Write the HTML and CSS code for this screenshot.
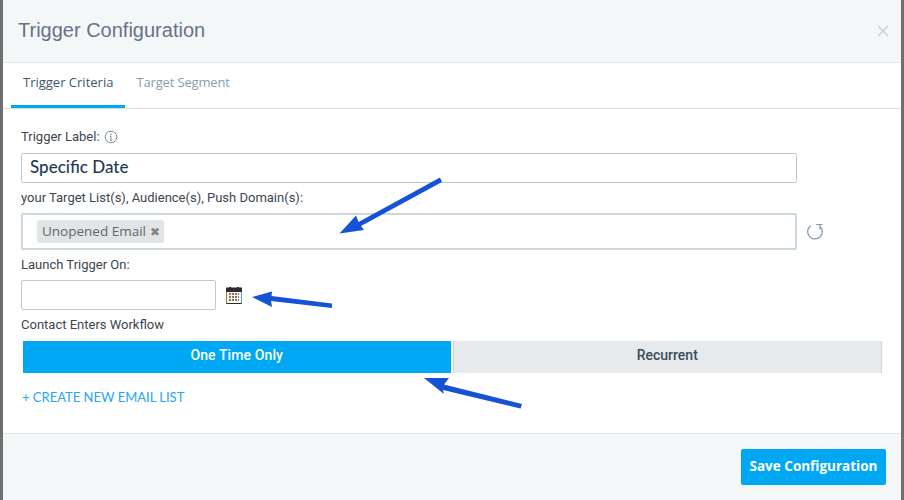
FILE: index.html
```html
<!DOCTYPE html>
<html lang="en">
<head>
<meta charset="utf-8">
<title>Trigger Configuration</title>
<link rel="stylesheet" href="styles.css">
</head>
<body>
<div class="modal">
  <header class="modal-head">
    <h1 class="modal-title">Trigger Configuration</h1>
    <svg class="close" width="12" height="12" viewBox="0 0 12 12"><path d="M1 1l10 10M11 1L1 11" stroke="#c9cdd0" stroke-width="1.4" fill="none"/></svg>
  </header>
  <nav class="tabs">
    <div class="tab active">Trigger Criteria</div>
    <div class="tab inactive">Target Segment</div>
  </nav>
  <main class="body">
    <div class="label label-first">Trigger Label:
      <svg class="info" width="14" height="14" viewBox="0 0 14 14"><circle cx="7" cy="7" r="5.8" fill="none" stroke="#7d8fa3" stroke-width="1"/><path d="M7 6.200v4M5.800 10.300h2.400M5.900 6.200H7" stroke="#7d8fa3" stroke-width="1" fill="none"/><circle cx="7" cy="4.200" r=".8" fill="#7d8fa3"/></svg>
    </div>
    <div class="text-input">Specific Date</div>
    <div class="label label-list">your Target List(s), Audience(s), Push Domain(s):</div>
    <div class="list-row">
      <div class="tag-box"><span class="tag">Unopened Email <span class="tag-x">✖</span></span></div>
      <svg class="refresh" width="18" height="18" viewBox="0 0 18 18"><path d="M4.600 2.800A7.300 7.300 0 1 0 14 3.400" fill="none" stroke="#7f9ab3" stroke-width="1.200"/><path d="M10 1.500h6.500M14 1.500v5" stroke="#7f9ab3" stroke-width="1.200" fill="none"/></svg>
    </div>
    <div class="label label-launch">Launch Trigger On:</div>
    <div class="date-row">
      <div class="date-input"></div>
      <svg class="cal" width="16" height="17" viewBox="0 0 16 17"><rect x=".5" y="1" width="15" height="15.500" fill="#f3f6f8" stroke="#2f2d2b"/><path d="M.5 2v14.500" stroke="#b5701f"/><path d="M15.500 2v14.500" stroke="#5a9fd8"/><rect x="0" y="1" width="16" height="4" fill="#2f2d2b"/><rect x="3" y="0" width="2" height="2.500" fill="#2f2d2b"/><rect x="11" y="0" width="2" height="2.500" fill="#2f2d2b"/><path d="M3 7h10M3 10h10M3 13h10" stroke="#6b4a20" stroke-width="1.600" stroke-dasharray="2 1"/></svg>
    </div>
    <div class="label label-contact">Contact Enters Workflow</div>
    <div class="toggle">
      <div class="toggle-btn on">One Time Only</div>
      <div class="toggle-btn off">Recurrent</div>
    </div>
    <div class="create">+ CREATE NEW EMAIL LIST</div>
  </main>
  <footer class="modal-foot">
    <div class="save">Save Configuration</div>
  </footer>
</div>
<svg class="arrows" width="904" height="500" viewBox="0 0 904 500">
  <path d="M339.500 233.500L356 215.500L358.500 222L440 177.500L442 182L361 226L364 230Z" fill="#1553d6"/>
  <path d="M252 297L272 291.500L271.500 296L332 303.500L332 308L271 301L272 307Z" fill="#1553d6"/>
  <path d="M424 378L449 378L444 384.500L522 404L520.500 408.500L443 390L444 394Z" fill="#1553d6"/>
</svg>
</body>
</html>
```
FILE: styles.css
```css
html, body { margin: 0; padding: 0; }
body {
  width: 904px;
  height: 500px;
  overflow: hidden;
  background: #6f6f6f;
  position: relative;
  font-family: "Roboto", "Liberation Sans", sans-serif;
  color: #39444f;
}
.modal {
  margin-left: 3px;
  width: 898px;
  height: 500px;
  background: #fff;
  display: flex;
  flex-direction: column;
}
.modal-head {
  height: 60px;
  background: #f4f7f8;
  border-bottom: 1px solid #e4e7e8;
  display: flex;
  align-items: center;
  justify-content: space-between;
  padding: 0 12px 2px 15px;
  flex: none;
}
.modal-title {
  margin: 0;
  font: 400 20px/24px "Liberation Sans", sans-serif;
  color: #69708a;
}
.close { margin-top: 2px; }
.tabs {
  height: 45px;
  flex: none;
  display: flex;
  padding-left: 8px;
  border-bottom: 1px solid #d8e0e5;
}
.tab {
  padding: 0 12px;
  height: 45px;
  box-sizing: border-box;
  font: 500 13px/39px "Open Sans", sans-serif;
  color: #8b9cae;
}
.tab.active {
  color: #3f566e;
  border-bottom: 3px solid #00a8f0;
}
.tab.inactive {
  padding-left: 11px;
  letter-spacing: -0.15px;
}
.body {
  flex: 1;
  padding: 0 18px;
}
.label {
  font: 400 13px/14px "Roboto", sans-serif;
  color: #3b4650;
}
.label-first { margin-top: 21px; display: flex; align-items: center; gap: 4px; }
.text-input {
  margin-top: 9px;
  width: 776px;
  height: 30px;
  box-sizing: border-box;
  border: 1px solid #c4c8cb;
  border-radius: 2px;
  padding-left: 8px;
  font: 500 17px/26px "Lato", sans-serif;
  color: #1f3a52;
}
.label-list { margin-top: 8px; }
.list-row { margin-top: 8px; display: flex; align-items: center; gap: 9px; }
.tag-box {
  width: 776px;
  height: 37px;
  box-sizing: border-box;
  border: 2px solid #ccd6dd;
  border-radius: 2px;
  padding: 5px 0 0 14px;
}
.tag {
  display: inline-block;
  height: 23px;
  padding: 0 4px 0 5px;
  background: #e2e4e6;
  border-radius: 3px;
  font: 400 13.500px/23px "Open Sans", sans-serif;
  color: #5d6874;
}
.tag-x { color: #7f8488; font-size: 12px; }
.label-launch { margin-top: 8px; }
.date-row { margin-top: 8px; display: flex; align-items: center; gap: 10px; }
.date-input {
  width: 195px;
  height: 30px;
  box-sizing: border-box;
  border: 1px solid #c4c8cb;
  border-radius: 2px;
}
.label-contact { margin-top: 8px; }
.toggle { margin: 9px 0 0 2px; display: flex; gap: 2px; width: 859px; }
.toggle-btn {
  flex: 1;
  height: 32px;
  text-align: center;
  font: 500 14px/29px "Roboto", sans-serif;
  letter-spacing: 0.1px;
}
.toggle-btn.on { background: #00a8f4; color: #fff; }
.toggle-btn.off { background: #e6eaed; color: #3d4a55; border-left: 1px solid #cfd4d8; border-right: 1px solid #d4d9dc; letter-spacing: 0; }
.create {
  margin: 17px 0 0 1px;
  font: 400 13px/14px "Lato", sans-serif;
  color: #29a6ee;
}
.modal-foot {
  height: 67px;
  flex: none;
  box-sizing: border-box;
  background: #f4f7f8;
  border-top: 1px solid #e2e5e6;
  padding: 15px 15px 0 0;
  display: flex;
  justify-content: flex-end;
}
.save {
  width: 145px;
  height: 36px;
  background: #00a8f4;
  border-radius: 2px;
  color: #fff;
  text-align: center;
  font: 700 13.500px/34px "Open Sans", sans-serif;
}
.arrows { position: absolute; left: 0; top: 0; pointer-events: none; }
```
